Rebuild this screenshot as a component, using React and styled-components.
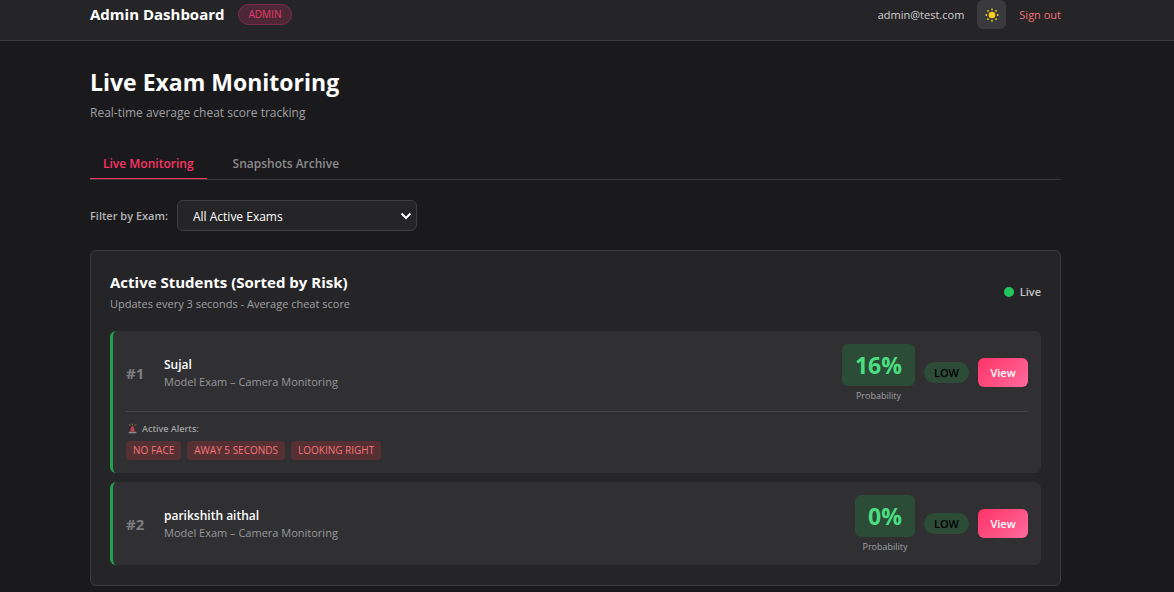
import React from "react";
import styled, { createGlobalStyle } from "styled-components";

const Global = createGlobalStyle`
  *, *::before, *::after { box-sizing: border-box; }
  body {
    margin: 0;
    background: #1a1a1c;
    color: #ffffff;
    font-family: "Segoe UI", "Open Sans", "Noto Sans", sans-serif;
    font-size: 13px;
    line-height: 20px;
  }
  h1, h2, h3, p, ul, ol { margin: 0; padding: 0; }
  ul, ol { list-style: none; }
  button, select { font-family: inherit; }
`;

const TopBar = styled.header`
  display: flex;
  align-items: flex-start;
  justify-content: space-between;
  height: 41px;
  padding: 0 113px 0 90px;
  background: #252527;
  border-bottom: 1px solid #3c3c3e;
`;
const Brand = styled.div`
  display: flex;
  align-items: center;
  gap: 13px;
  height: 28px;
`;
const BrandName = styled.span`
  font-size: 15px;
  font-weight: 700;
`;
const RoleBadge = styled.span`
  padding: 0 10px;
  border: 1px solid #7e2d48;
  border-radius: 11px;
  background: #4d2735;
  color: #e93a6b;
  font-size: 10px;
  line-height: 19px;
`;
const Account = styled.div`
  display: flex;
  align-items: center;
  gap: 13px;
  height: 29px;
  font-size: 11px;
  color: #d0d0d2;
`;
const ThemeButton = styled.button`
  display: grid;
  place-items: center;
  width: 29px;
  height: 29px;
  padding: 0;
  border: 0;
  border-radius: 6px;
  background: #3a3a3c;
`;
const SignOut = styled.a`
  color: #f27078;
  text-decoration: none;
`;

const Page = styled.main`
  padding: 27px 113px 6px 90px;
`;
const Title = styled.h1`
  font-size: 23px;
  line-height: 28px;
  font-weight: 700;
`;
const Subtitle = styled.p`
  margin-top: 7px;
  font-size: 12px;
  color: #a0a0a3;
`;
const Tabs = styled.div`
  display: flex;
  gap: 13px;
  margin-top: 25px;
  border-bottom: 1px solid #39393b;
`;
const Tab = styled.button`
  height: 31px;
  padding: 0 13px;
  border: 0;
  border-bottom: 1px solid ${(p) => (p.$active ? "#ff3366" : "transparent")};
  background: none;
  color: ${(p) => (p.$active ? "#ff3366" : "#8b8b8e")};
  font-size: 12px;
  font-weight: 600;
`;
const Filter = styled.div`
  display: flex;
  align-items: center;
  gap: 9px;
  margin-top: 20px;
`;
const FilterLabel = styled.label`
  font-size: 11px;
  font-weight: 600;
  line-height: 18px;
  color: #b4b4b7;
`;
const SelectBox = styled.div`
  display: grid;
  align-items: center;
  width: 240px;
`;
const Select = styled.select`
  grid-area: 1 / 1;
  width: 100%;
  height: 31px;
  padding: 1px 15px 0;
  appearance: none;
  border: 1px solid #3e3e40;
  border-radius: 6px;
  background: #252527;
  color: #ffffff;
  font-size: 12px;
`;
const Chevron = styled.svg`
  grid-area: 1 / 1;
  justify-self: end;
  margin-right: 5px;
  pointer-events: none;
`;

const Panel = styled.section`
  margin-top: 19px;
  padding: 19px 19px 20px;
  border: 1px solid #3c3c3e;
  border-radius: 6px;
  background: #252527;
`;
const PanelHead = styled.div`
  display: flex;
  align-items: center;
  justify-content: space-between;
  margin-bottom: 17px;
`;
const PanelTitle = styled.h2`
  font-size: 15px;
  line-height: 24px;
  font-weight: 700;
`;
const PanelNote = styled.p`
  font-size: 11px;
  color: #a0a0a3;
`;
const Live = styled.span`
  display: flex;
  align-items: center;
  gap: 6px;
  font-size: 11px;
  font-weight: 600;
  color: #c4c4c6;
`;
const Dot = styled.i`
  width: 10px;
  height: 10px;
  border-radius: 50%;
  background: #22c55e;
`;

const Students = styled.ol`
  display: grid;
  gap: 9px;
`;
const Card = styled.li`
  padding: 13px;
  border-left: 3px solid #22a050;
  border-radius: 6px;
  background: #303032;
`;
const Row = styled.div`
  display: flex;
  align-items: center;
`;
const Rank = styled.span`
  width: 38px;
  font-size: 15px;
  font-weight: 700;
  color: #7d7d80;
`;
const Who = styled.div`
  flex: 1;
  line-height: 17px;
`;
const Name = styled.h3`
  font-size: 12px;
  font-weight: 600;
`;
const Exam = styled.p`
  font-size: 11px;
  color: #98989b;
`;
const Metrics = styled.div`
  display: flex;
  align-items: center;
  gap: 9px;
`;
const Score = styled.div`
  display: grid;
  justify-items: center;
`;
const Percent = styled.strong`
  padding: 0 13px;
  border-radius: 6px;
  background: #2c4c38;
  color: #4ade80;
  font-size: 23px;
  line-height: 42px;
  font-weight: 700;
`;
const Caption = styled.span`
  margin-top: 4px;
  font-size: 9px;
  line-height: 11px;
  color: #a0a0a3;
`;
const Risk = styled.span`
  padding: 0 10px;
  border-radius: 11px;
  background: #2c4c38;
  color: #000000;
  font-size: 11px;
  line-height: 21px;
  font-weight: 600;
`;
const ViewButton = styled.button`
  width: 50px;
  height: 29px;
  padding: 0;
  border: 0;
  border-radius: 6px;
  background: linear-gradient(135deg, #ff3366, #ff6b9d);
  color: #ffffff;
  font-size: 11px;
  font-weight: 600;
`;
const Alerts = styled.div`
  margin-top: 10px;
  padding-top: 9px;
  border-top: 1px solid #444446;
`;
const AlertsTitle = styled.p`
  display: flex;
  align-items: center;
  gap: 4px;
  padding-left: 1px;
  font-size: 9px;
  line-height: 15px;
  font-weight: 600;
  color: #a0a0a3;
`;
const AlertList = styled.ul`
  display: flex;
  gap: 6px;
  margin-top: 5px;
`;
const AlertTag = styled.li`
  padding: 0 7px;
  border-radius: 4px;
  background: #573033;
  color: #f4757a;
  font-size: 10px;
  line-height: 19px;
`;

const Sun = () => (
  <svg width="14" height="14" viewBox="0 0 14 14" fill="#facc15" aria-hidden="true">
    <circle cx="7" cy="7" r="3.3" />
    {[0, 45, 90, 135, 180, 225, 270, 315].map((a) => (
      <circle key={a} cx="7" cy="1.3" r="0.9" transform={`rotate(${a} 7 7)`} />
    ))}
  </svg>
);

const Siren = () => (
  <svg width="11" height="11" viewBox="0 0 11 11" fill="none" aria-hidden="true">
    <path d="M5.5 0.6v1.8M2 1.2l1.3 1.6M9 1.2L7.7 2.8" stroke="#b07a45" strokeWidth="0.8" />
    <path d="M3.2 8.8L3.8 5a1.7 1.7 0 0 1 3.4 0l.6 3.8z" fill="#b8414c" />
    <path d="M1.7 8.8h7.6v1.5H1.7z" fill="#8c8790" />
  </svg>
);

const students = [
  {
    name: "Sujal",
    exam: "Model Exam – Camera Monitoring",
    score: 16,
    risk: "LOW",
    alerts: ["NO FACE", "AWAY 5 SECONDS", "LOOKING RIGHT"],
  },
  {
    name: "parikshith aithal",
    exam: "Model Exam – Camera Monitoring",
    score: 0,
    risk: "LOW",
    alerts: [],
  },
];

function Student({ rank, student }) {
  return (
    <Card>
      <Row>
        <Rank>#{rank}</Rank>
        <Who>
          <Name>{student.name}</Name>
          <Exam>{student.exam}</Exam>
        </Who>
        <Metrics>
          <Score>
            <Percent>{student.score}%</Percent>
            <Caption>Probability</Caption>
          </Score>
          <Risk>{student.risk}</Risk>
          <ViewButton type="button">View</ViewButton>
        </Metrics>
      </Row>
      {student.alerts.length > 0 && (
        <Alerts>
          <AlertsTitle>
            <Siren />
            Active Alerts:
          </AlertsTitle>
          <AlertList>
            {student.alerts.map((a) => (
              <AlertTag key={a}>{a}</AlertTag>
            ))}
          </AlertList>
        </Alerts>
      )}
    </Card>
  );
}

export default function App() {
  return (
    <>
      <Global />
      <TopBar>
        <Brand>
          <BrandName>Admin Dashboard</BrandName>
          <RoleBadge>ADMIN</RoleBadge>
        </Brand>
        <Account>
          <span>admin@test.com</span>
          <ThemeButton type="button" aria-label="Toggle theme">
            <Sun />
          </ThemeButton>
          <SignOut href="#signout">Sign out</SignOut>
        </Account>
      </TopBar>
      <Page>
        <Title>Live Exam Monitoring</Title>
        <Subtitle>Real-time average cheat score tracking</Subtitle>
        <Tabs role="tablist">
          <Tab type="button" role="tab" aria-selected="true" $active>
            Live Monitoring
          </Tab>
          <Tab type="button" role="tab" aria-selected="false">
            Snapshots Archive
          </Tab>
        </Tabs>
        <Filter>
          <FilterLabel htmlFor="exam">Filter by Exam:</FilterLabel>
          <SelectBox>
            <Select id="exam" defaultValue="all">
              <option value="all">All Active Exams</option>
            </Select>
            <Chevron width="12" height="8" viewBox="0 0 12 8" fill="none" aria-hidden="true">
              <path d="M1.5 1.5L6 6l4.500-4.500" stroke="#ffffff" strokeWidth="2" />
            </Chevron>
          </SelectBox>
        </Filter>
        <Panel>
          <PanelHead>
            <div>
              <PanelTitle>Active Students (Sorted by Risk)</PanelTitle>
              <PanelNote>Updates every 3 seconds - Average cheat score</PanelNote>
            </div>
            <Live>
              <Dot />
              Live
            </Live>
          </PanelHead>
          <Students>
            {students.map((s, i) => (
              <Student key={s.name} rank={i + 1} student={s} />
            ))}
          </Students>
        </Panel>
      </Page>
    </>
  );
}
